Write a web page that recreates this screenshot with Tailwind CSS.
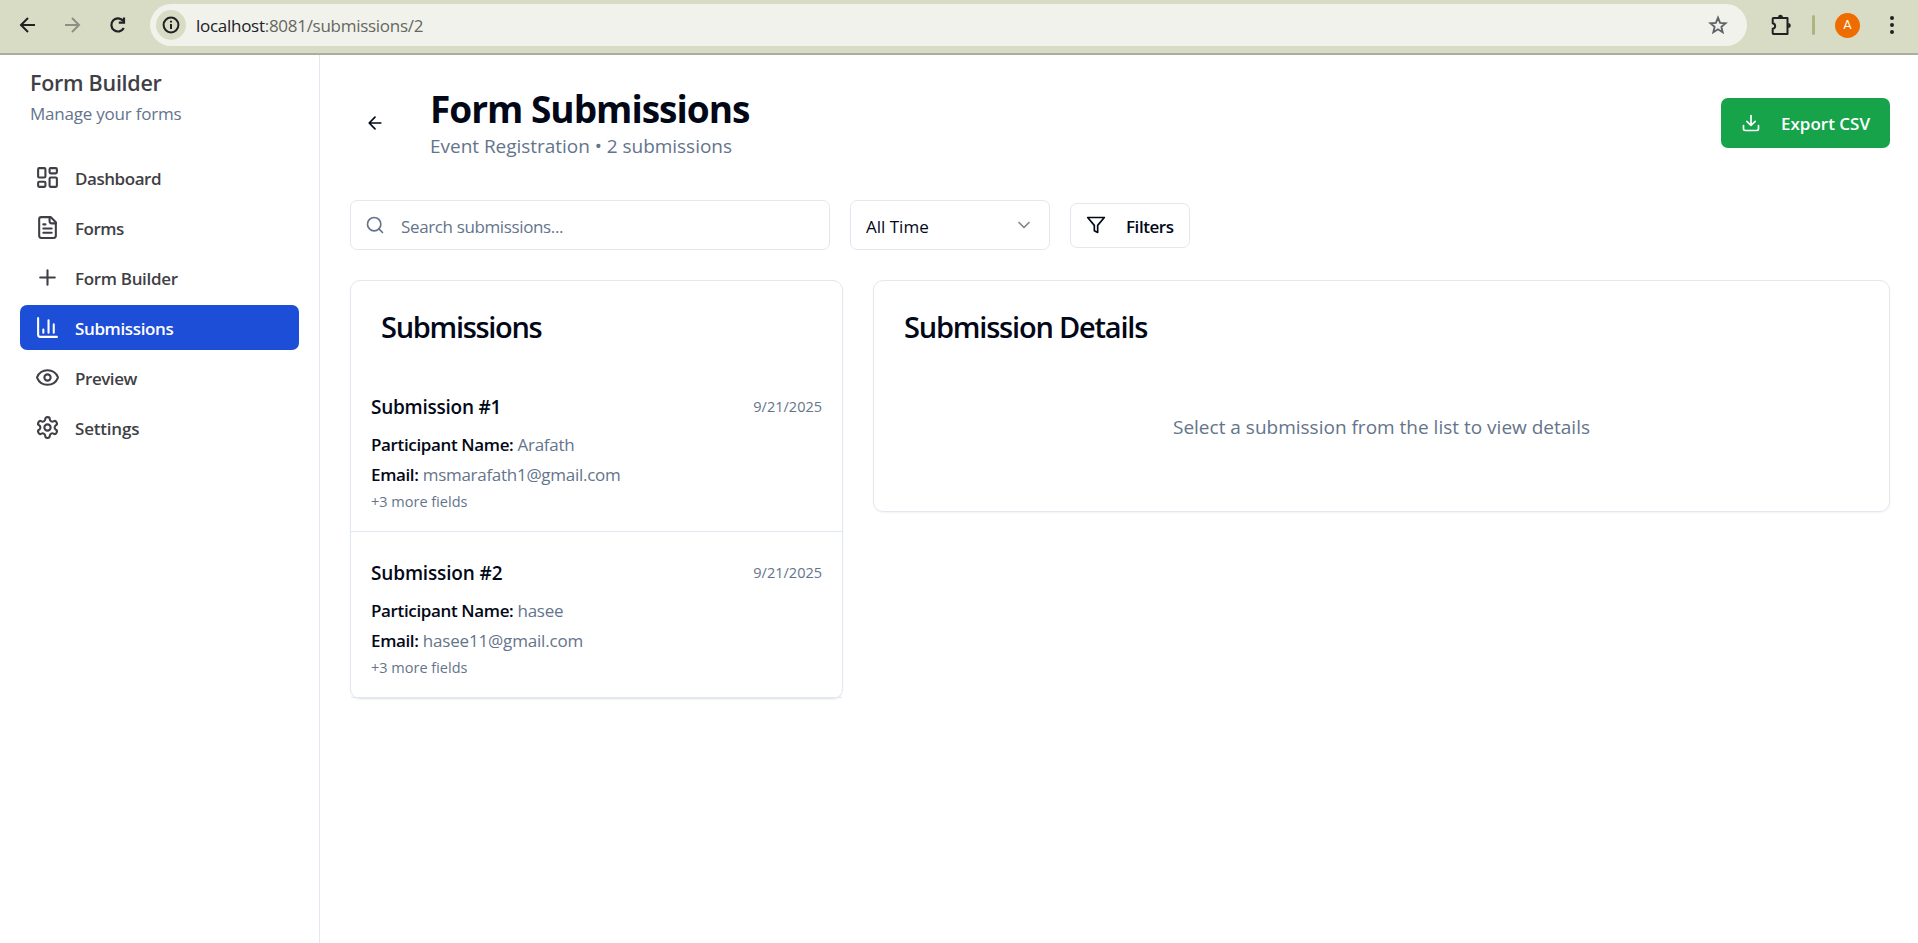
<!DOCTYPE html>
<html lang="en">
<head>
<meta charset="utf-8">
<title>Form Submissions</title>
<script src="https://cdn.jsdelivr.net/npm/@tailwindcss/browser@4"></script>
</head>
<body class="h-screen overflow-hidden bg-white font-['Open_Sans','Noto_Sans',sans-serif] text-[#020817] flex flex-col">
<!-- Browser toolbar -->
<header class="h-[55px] shrink-0 bg-[#d9dcc5] border-b-2 border-[#abae9b] flex items-center pb-[3px]">
  <svg class="ml-[16px] w-6 h-6 shrink-0 text-[#202124]" viewBox="0 0 24 24" fill="none" stroke="currentColor" stroke-width="2"><path d="M19 12H5.500M12 5l-7 7 7 7"/></svg>
  <svg class="ml-[20px] w-6 h-6 shrink-0 text-[#8d8f83]" viewBox="0 0 24 24" fill="none" stroke="currentColor" stroke-width="2"><path d="M5 12h13.500M12 5l7 7-7 7"/></svg>
  <svg class="ml-[22px] w-6 h-6 shrink-0 text-[#202124]" viewBox="0 0 24 24" fill="none" stroke="currentColor" stroke-width="2.200"><path d="M17.800 15a6.600 6.600 0 1 1-.5-7"/><path d="M18 4.500v5.200h-5.200"/></svg>
  <div class="ml-[20px] w-[1597px] h-[42px] shrink-0 rounded-full bg-[#f1f2eb] flex items-center pl-[6px] pr-[18px]">
    <div class="w-[30px] h-[30px] rounded-full bg-[#d9dcc5] flex items-center justify-center">
      <svg class="w-[18px] h-[18px] text-[#202124]" viewBox="0 0 18 18" fill="none" stroke="currentColor" stroke-width="2"><circle cx="9" cy="9" r="7.400"/><path d="M9 8v5M9 4.800v1.800"/></svg>
    </div>
    <span class="ml-[10px] pt-px text-[17px] tracking-[-0.28px] whitespace-nowrap text-[#202124]">localhost<span class="text-[#65675f]">:8081/submissions/2</span></span>
    <svg class="ml-auto w-[22px] h-[22px] text-[#5f6368]" viewBox="0 0 24 24" fill="none" stroke="currentColor" stroke-width="2"><path d="M12 4l2.300 5.600 6 .5-4.600 3.900 1.400 5.900-5.100-3.200-5.100 3.200L8.300 14 3.700 10.100l6-.5z"/></svg>
  </div>
  <svg class="ml-[22px] w-[24px] h-[24px] shrink-0 text-[#202124]" viewBox="0 0 24 24" fill="none" stroke="currentColor" stroke-width="2"><path d="M4.500 5h14v16h-14a.8.8 0 0 1-.8-.8v-4.400c3.300-.8 3.300-4.800 0-5.600V5.800a.8.800 0 0 1 .8-.8z" stroke-linejoin="round"/><path d="M9 4.200a2.500 2.500 0 0 1 5 0zM19.200 10a2.500 2.500 0 0 1 0 5z" fill="currentColor" stroke="none"/></svg>
  <div class="ml-[19px] w-[3px] h-[20px] rounded-full bg-[#acb57e]"></div>
  <div class="ml-[20px] w-[25px] h-[25px] rounded-full bg-[#ef6c00] text-white text-[13px] flex items-center justify-center font-[Roboto,sans-serif]">A</div>
  <svg class="ml-[20px] w-[24px] h-[24px] text-[#202124]" viewBox="0 0 24 24" fill="currentColor"><circle cx="12" cy="5" r="2"/><circle cx="12" cy="12" r="2"/><circle cx="12" cy="19" r="2"/></svg>
</header>
<div class="flex flex-1 min-h-0">
  <!-- Sidebar -->
  <aside class="w-[320px] shrink-0 border-r border-[#e2e8f0] text-[#3f3f46]">
    <div class="pl-[30px] pt-[12px] whitespace-nowrap">
      <div class="text-[21.5px] leading-[32px] font-semibold tracking-[-0.27px]">Form Builder</div>
      <div class="pt-px text-[17px] leading-[28px] text-[#64748b] tracking-[-0.22px]">Manage your forms</div>
    </div>
    <nav class="mt-[27px] px-[20px] flex flex-col gap-[5px] text-[17px] font-semibold">
      <a class="h-[45px] rounded-[7px] flex items-center gap-[15px] pl-[15px]"><svg class="w-[25px] h-[25px]" viewBox="0 0 24 24" fill="none" stroke="currentColor" stroke-width="2" stroke-linecap="round" stroke-linejoin="round"><rect width="7" height="9" x="3" y="3" rx="1"/><rect width="7" height="5" x="14" y="3" rx="1"/><rect width="7" height="9" x="14" y="12" rx="1"/><rect width="7" height="5" x="3" y="16" rx="1"/></svg><span class="pt-[2px] tracking-[-0.45px]">Dashboard</span></a>
      <a class="h-[45px] rounded-[7px] flex items-center gap-[15px] pl-[15px]"><svg class="w-[25px] h-[25px]" viewBox="0 0 24 24" fill="none" stroke="currentColor" stroke-width="2" stroke-linecap="round" stroke-linejoin="round"><path d="M15 2H6a2 2 0 0 0-2 2v16a2 2 0 0 0 2 2h12a2 2 0 0 0 2-2V7Z"/><path d="M14 2v4a2 2 0 0 0 2 2h4M10 9H8M16 13H8M16 17H8"/></svg><span class="pt-[2px] tracking-[-0.5px]">Forms</span></a>
      <a class="h-[45px] rounded-[7px] flex items-center gap-[15px] pl-[15px]"><svg class="w-[25px] h-[25px]" viewBox="0 0 24 24" fill="none" stroke="currentColor" stroke-width="2" stroke-linecap="round" stroke-linejoin="round"><path d="M5 12h14M12 5v14"/></svg><span class="pt-[2px] tracking-[-0.33px]">Form Builder</span></a>
      <a class="h-[45px] rounded-[7px] flex items-center gap-[15px] pl-[15px] bg-[#1d4ed8] text-white"><svg class="w-[25px] h-[25px]" viewBox="0 0 24 24" fill="none" stroke="currentColor" stroke-width="2" stroke-linecap="round" stroke-linejoin="round"><path d="M3 3v16a2 2 0 0 0 2 2h16M18 17V9M13 17V5M8 17v-3"/></svg><span class="pt-[2px] tracking-[-0.37px]">Submissions</span></a>
      <a class="h-[45px] rounded-[7px] flex items-center gap-[15px] pl-[15px]"><svg class="w-[25px] h-[25px]" viewBox="0 0 24 24" fill="none" stroke="currentColor" stroke-width="2" stroke-linecap="round" stroke-linejoin="round"><path d="M2.062 12.348a1 1 0 0 1 0-.696 10.750 10.750 0 0 1 19.876 0 1 1 0 0 1 0 .696 10.750 10.750 0 0 1-19.876 0"/><circle cx="12" cy="12" r="3"/></svg><span class="pt-[2px] tracking-[-0.45px]">Preview</span></a>
      <a class="h-[45px] rounded-[7px] flex items-center gap-[15px] pl-[15px]"><svg class="w-[25px] h-[25px]" viewBox="0 0 24 24" fill="none" stroke="currentColor" stroke-width="2" stroke-linecap="round" stroke-linejoin="round"><path d="M12.220 2h-.44a2 2 0 0 0-2 2v.18a2 2 0 0 1-1 1.730l-.43.25a2 2 0 0 1-2 0l-.15-.08a2 2 0 0 0-2.730.73l-.22.38a2 2 0 0 0 .73 2.730l.15.1a2 2 0 0 1 1 1.720v.51a2 2 0 0 1-1 1.740l-.15.09a2 2 0 0 0-.73 2.730l.22.38a2 2 0 0 0 2.730.73l.15-.08a2 2 0 0 1 2 0l.43.25a2 2 0 0 1 1 1.730V20a2 2 0 0 0 2 2h.44a2 2 0 0 0 2-2v-.18a2 2 0 0 1 1-1.730l.43-.25a2 2 0 0 1 2 0l.15.08a2 2 0 0 0 2.730-.73l.22-.39a2 2 0 0 0-.73-2.730l-.15-.08a2 2 0 0 1-1-1.740v-.5a2 2 0 0 1 1-1.740l.15-.09a2 2 0 0 0 .73-2.730l-.22-.38a2 2 0 0 0-2.730-.73l-.15.08a2 2 0 0 1-2 0l-.43-.25a2 2 0 0 1-1-1.730V4a2 2 0 0 0-2-2z"/><circle cx="12" cy="12" r="3"/></svg><span class="pt-[2px] tracking-[-0.2px]">Settings</span></a>
    </nav>
  </aside>
  <!-- Main content -->
  <main class="flex-1 pl-[30px] pr-[28px] whitespace-nowrap">
    <div class="flex items-center h-[135px]">
      <button class="w-[50px] h-[50px] flex items-center justify-center"><svg class="w-5 h-5" viewBox="0 0 24 24" fill="none" stroke="currentColor" stroke-width="2" stroke-linecap="round" stroke-linejoin="round"><path d="m12 19-7-7 7-7M19 12H5"/></svg></button>
      <div class="ml-[30px]">
        <h1 class="text-[37px] leading-[46px] font-bold tracking-[-1px]">Form Submissions</h1>
        <p class="text-[19px] leading-[28px] text-[#64748b] tracking-[-0.03px]">Event Registration • 2 submissions</p>
      </div>
      <button class="ml-auto w-[169px] h-[50px] rounded-[7px] bg-[#16a34a] text-white flex items-center pl-[20px] text-[17px] font-semibold"><svg class="w-5 h-5 mr-[20px]" viewBox="0 0 24 24" fill="none" stroke="currentColor" stroke-width="2" stroke-linecap="round" stroke-linejoin="round"><path d="M21 15v4a2 2 0 0 1-2 2H5a2 2 0 0 1-2-2v-4M7 10l5 5 5-5M12 15V3"/></svg><span class="pt-[2px]">Export CSV</span></button>
    </div>
    <div class="mt-[10px] flex items-center gap-[20px] text-[17px]">
      <div class="w-[480px] h-[50px] rounded-[7px] border border-[#e2e8f0] flex items-center pl-[14px] text-[#64748b]"><svg class="w-5 h-5 mr-[16px]" viewBox="0 0 24 24" fill="none" stroke="currentColor" stroke-width="2" stroke-linecap="round"><circle cx="11" cy="11" r="8"/><path d="m21 21-4.300-4.300"/></svg><span class="pt-[3px] tracking-[-0.37px]">Search submissions...</span></div>
      <div class="w-[200px] h-[50px] rounded-[7px] border border-[#e2e8f0] flex items-center justify-between px-[15px]"><span class="pt-[3px]">All Time</span><svg class="w-5 h-5 text-[#80848c]" viewBox="0 0 24 24" fill="none" stroke="currentColor" stroke-width="2" stroke-linecap="round" stroke-linejoin="round"><path d="m6 9 6 6 6-6"/></svg></div>
      <button class="w-[120px] h-[45px] rounded-[7px] border border-[#e2e8f0] flex items-center pl-[15px] font-semibold"><svg class="w-5 h-5 mr-[20px]" viewBox="0 0 24 24" fill="none" stroke="currentColor" stroke-width="2" stroke-linecap="round" stroke-linejoin="round"><path d="M22 3H2l8 9.460V19l4 2v-8.540z"/></svg><span class="pt-[3px] tracking-[-0.45px]">Filters</span></button>
    </div>
    <div class="mt-[30px] flex items-start gap-[30px]">
      <section class="w-[493px] h-[419px] rounded-[10px] border border-[#e2e8f0] shadow-xs">
        <h2 class="h-[84px] pl-[30px] pt-[27px] text-[29px] leading-[38px] font-semibold tracking-[-1.3px]">Submissions</h2>
        <div class="h-[167px] px-[20px] pt-[27px] border-b border-[#e2e8f0]">
          <div class="flex justify-between leading-[30px]"><span class="text-[19px] font-semibold tracking-[-0.25px]">Submission #1</span><span class="text-[14.5px] text-[#64748b]">9/21/2025</span></div>
          <div class="mt-[8px] text-[17px] leading-[30px] text-[#64748b] tracking-[-0.28px]"><span class="font-semibold text-[#020817] tracking-[-0.36px]">Participant Name:</span> Arafath</div>
          <div class="text-[17px] leading-[30px] text-[#64748b] tracking-[-0.28px]"><span class="font-semibold text-[#020817] tracking-[-0.36px]">Email:</span> msmarafath1@gmail.com</div>
          <div class="text-[14.5px] leading-[24px] text-[#64748b]">+3 more fields</div>
        </div>
        <div class="h-[166px] px-[20px] pt-[26px] border-b border-[#e2e8f0]">
          <div class="flex justify-between leading-[30px]"><span class="text-[19px] font-semibold tracking-[-0.15px]">Submission #2</span><span class="text-[14.5px] text-[#64748b]">9/21/2025</span></div>
          <div class="mt-[8px] text-[17px] leading-[30px] text-[#64748b] tracking-[-0.28px]"><span class="font-semibold text-[#020817] tracking-[-0.36px]">Participant Name:</span> hasee</div>
          <div class="text-[17px] leading-[30px] text-[#64748b] tracking-[-0.18px]"><span class="font-semibold text-[#020817] tracking-[-0.36px]">Email:</span> hasee11@gmail.com</div>
          <div class="text-[14.5px] leading-[24px] text-[#64748b]">+3 more fields</div>
        </div>
      </section>
      <section class="w-[1017px] h-[232px] rounded-[10px] border border-[#e2e8f0] shadow-xs">
        <h2 class="pl-[30px] pt-[27px] text-[29px] leading-[38px] font-semibold tracking-[-1.2px]">Submission Details</h2>
        <p class="mt-[66px] text-center text-[19px] leading-[30px] text-[#64748b]">Select a submission from the list to view details</p>
      </section>
    </div>
  </main>
</div>
</body>
</html>
